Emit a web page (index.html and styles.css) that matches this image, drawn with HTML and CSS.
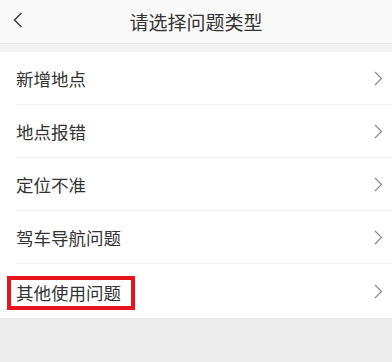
FILE: index.html
```html
<!DOCTYPE html>
<html lang="zh-CN">
<head>
    <meta charset="UTF-8">
    <meta name="viewport" content="width=device-width, initial-scale=1.0">
    <title>请选择问题类型</title>
    <link rel="stylesheet" href="styles.css">
</head>
<body>
    <div class="page">
        <div class="header">
            <svg class="back" width="10" height="16" viewBox="0 0 10 16">
                <polyline points="8.5,1 1.5,8 8.5,15" fill="none" stroke="#444" stroke-width="1.6"/>
            </svg>
            <h1>请选择问题类型</h1>
        </div>

        <ul class="list">
            <li class="item"><span class="label">新增地点</span><span class="arrow"><svg width="9" height="15" viewBox="0 0 9 15"><polyline points="1,1 7.5,7.5 1,14" fill="none" stroke="#8a8a8a" stroke-width="1.2"/></svg></span></li>
            <li class="item"><span class="label">地点报错</span><span class="arrow"><svg width="9" height="15" viewBox="0 0 9 15"><polyline points="1,1 7.5,7.5 1,14" fill="none" stroke="#8a8a8a" stroke-width="1.2"/></svg></span></li>
            <li class="item"><span class="label">定位不准</span><span class="arrow"><svg width="9" height="15" viewBox="0 0 9 15"><polyline points="1,1 7.5,7.5 1,14" fill="none" stroke="#8a8a8a" stroke-width="1.2"/></svg></span></li>
            <li class="item"><span class="label">驾车导航问题</span><span class="arrow"><svg width="9" height="15" viewBox="0 0 9 15"><polyline points="1,1 7.5,7.5 1,14" fill="none" stroke="#8a8a8a" stroke-width="1.2"/></svg></span></li>
            <li class="item"><span class="label marked">其他使用问题</span><span class="arrow"><svg width="9" height="15" viewBox="0 0 9 15"><polyline points="1,1 7.5,7.5 1,14" fill="none" stroke="#8a8a8a" stroke-width="1.2"/></svg></span></li>
        </ul>
    </div>
</body>
</html>
```

FILE: styles.css
```css
body, html {
    margin: 0;
    padding: 0;
    font-family: 'Noto Sans CJK SC', 'Noto Sans', sans-serif;
    background-color: #ededed;
    height: 100%;
    overflow: hidden;
}
.page {
    background-color: #f2f2f2;
}
.header {
    height: 43px;
    background-color: #f9f9f9;
    border-bottom: 1px solid #e9e9e9;
    display: flex;
    align-items: center;
    justify-content: center;
    position: relative;
}
.back {
    position: absolute;
    left: 13px;
    top: 12px;
}
h1 {
    margin: 0;
    font-size: 19px;
    font-weight: normal;
    color: #333;
    line-height: 43px;
}
.list {
    list-style: none;
    margin: 8px 0 0 0;
    padding: 0 0 0 16px;
    background-color: white;
}
.item {
    height: 52px;
    display: flex;
    align-items: center;
    justify-content: space-between;
    border-bottom: 1px solid #f2f2f2;
    padding-right: 9px;
}
.item:last-child {
    border-bottom: none;
    height: 54px;
}
.label {
    font-size: 17.5px;
    color: #333;
}
.arrow {
    display: flex;
    align-items: center;
}
.marked {
    display: inline-block;
    border: 4px solid #e8141c;
    padding: 0 10px 0 5px;
    margin-left: -9px;
    line-height: 26px;
    margin-top: 3px;
}
```
